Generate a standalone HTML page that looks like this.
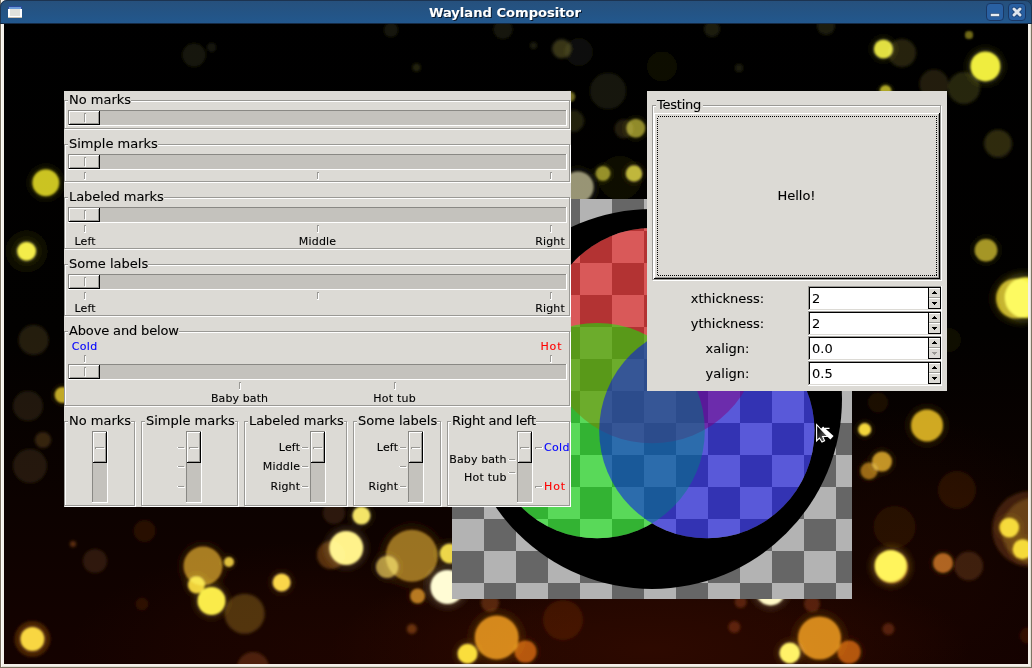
<!DOCTYPE html><html><head><meta charset="utf-8"><title>Wayland Compositor</title><style>
html,body{margin:0;padding:0}body{width:1032px;height:668px;overflow:hidden;position:relative;background:#e8e6e0;font-family:"DejaVu Sans","Liberation Sans",sans-serif}
.abs{position:absolute;display:block}
#content{position:absolute;left:4px;top:24px;width:1024px;height:640px;overflow:hidden;background:#000}
#content>.in{position:absolute;left:-4px;top:-24px;width:1032px;height:668px}
text{white-space:pre}
</style></head><body>
<svg class="abs" style="left:0;top:0" width="1032" height="668" font-family="DejaVu Sans, Liberation Sans, sans-serif"><defs><linearGradient id="tb" x1="0" y1="0" x2="0" y2="1"><stop offset="0" stop-color="#26507c"/><stop offset="1" stop-color="#22588e"/></linearGradient></defs><g shape-rendering="crispEdges"><rect x="0" y="0" width="1032" height="668" fill="#f4f1ea"/><rect x="1030" y="0" width="1" height="667" fill="#e4e0d6"/><rect x="1" y="666" width="1030" height="1" fill="#e4e0d6"/><rect x="1" y="0" width="1" height="667" fill="#fbf9f4"/><rect x="0" y="0" width="1" height="668" fill="#7d7463"/><rect x="1031" y="0" width="1" height="668" fill="#7d7463"/><rect x="0" y="667" width="1032" height="1" fill="#7d7463"/></g><rect x="1024" y="0" width="8" height="8" fill="#1d3f60"/><path d="M0 24 V7 A7 7 0 0 1 7 0 H1025 A7 7 0 0 1 1032 7 V24 Z" fill="url(#tb)"/><path d="M0.5 24 V7 A6.5 6.5 0 0 1 7 0.5 H1025 A6.5 6.5 0 0 1 1031.5 7 V24" fill="none" stroke="#1c3350" stroke-width="1"/><g shape-rendering="crispEdges"><rect x="0" y="23" width="1032" height="1" fill="#152a44"/></g></svg>
<div id="content"><div class="in">
<svg class="abs" style="left:0;top:0" width="1032" height="668"><defs><linearGradient id="bgv" x1="0" y1="0" x2="0" y2="1"><stop offset="0" stop-color="#000000"/><stop offset="0.5" stop-color="#020100"/><stop offset="0.75" stop-color="#0c0200"/><stop offset="1" stop-color="#150200"/></linearGradient><radialGradient id="glow1" cx="0.5" cy="0.5" r="0.5"><stop offset="0" stop-color="#300a00"/><stop offset="0.5" stop-color="#300a00" stop-opacity="0.7"/><stop offset="1" stop-color="#300a00" stop-opacity="0"/></radialGradient><filter id="bl" x="-5%" y="-5%" width="110%" height="110%"><feGaussianBlur stdDeviation="0.8"/></filter><filter id="bl2" x="-5%" y="-5%" width="110%" height="110%"><feGaussianBlur stdDeviation="1.8"/></filter><filter id="bl3" x="-5%" y="-5%" width="110%" height="110%"><feGaussianBlur stdDeviation="3"/></filter></defs><rect width="1032" height="668" fill="url(#bgv)"/><ellipse cx="650" cy="650" rx="320" ry="100" fill="url(#glow1)" opacity="0.9"/><ellipse cx="330" cy="650" rx="260" ry="110" fill="url(#glow1)" opacity="0.3"/><ellipse cx="900" cy="560" rx="170" ry="150" fill="url(#glow1)" opacity="0.22"/><g filter="url(#bl2)" style="mix-blend-mode:screen"><circle cx="902" cy="53" r="14" fill="#25230c" style="mix-blend-mode:screen"/><circle cx="624" cy="128.8" r="9.5" fill="#201f10" style="mix-blend-mode:screen"/><circle cx="608" cy="91" r="18" fill="#151509" style="mix-blend-mode:screen"/><circle cx="579" cy="52" r="14" fill="#111107" style="mix-blend-mode:screen"/><circle cx="662" cy="66.5" r="15" fill="#0d0d04" style="mix-blend-mode:screen"/><circle cx="712" cy="29" r="8" fill="#1a1a0b" style="mix-blend-mode:screen"/><circle cx="739" cy="68" r="4" fill="#1b1b0c" style="mix-blend-mode:screen"/><circle cx="826" cy="26" r="9" fill="#1a1a09" style="mix-blend-mode:screen"/><circle cx="964" cy="88" r="16" fill="#27260c" style="mix-blend-mode:screen"/><circle cx="934" cy="84" r="14.5" fill="#201f08" style="mix-blend-mode:screen"/><circle cx="997.5" cy="143" r="13.5" fill="#161507" style="mix-blend-mode:screen"/><circle cx="620" cy="178" r="22" fill="#111006" style="mix-blend-mode:screen"/><circle cx="573" cy="121" r="11" fill="#212011" style="mix-blend-mode:screen"/><circle cx="561.6" cy="48.8" r="9.5" fill="#373618" style="mix-blend-mode:screen"/><circle cx="503" cy="29.5" r="9.5" fill="#171708" style="mix-blend-mode:screen"/><circle cx="391" cy="30" r="7" fill="#161608" style="mix-blend-mode:screen"/><circle cx="416.5" cy="67.5" r="4" fill="#202010" style="mix-blend-mode:screen"/><circle cx="533.5" cy="45.4" r="3.5" fill="#1a1a0c" style="mix-blend-mode:screen"/><circle cx="194" cy="55" r="11.6" fill="#181808" style="mix-blend-mode:screen"/><circle cx="211.7" cy="47.3" r="4.5" fill="#171710" style="mix-blend-mode:screen"/><circle cx="26.6" cy="251.3" r="21" fill="#111004" style="mix-blend-mode:screen"/><circle cx="33.6" cy="340" r="15" fill="#231d0e" style="mix-blend-mode:screen"/><circle cx="28" cy="406" r="15" fill="#1a1509" style="mix-blend-mode:screen"/><circle cx="43" cy="440" r="8" fill="#2d230e" style="mix-blend-mode:screen"/><circle cx="30" cy="466" r="17" fill="#1a1309" style="mix-blend-mode:screen"/><circle cx="32.4" cy="639" r="18" fill="#2d1804" style="mix-blend-mode:screen"/><circle cx="95" cy="561" r="12" fill="#231309" style="mix-blend-mode:screen"/><circle cx="144.6" cy="531" r="11" fill="#1a0b04" style="mix-blend-mode:screen"/><circle cx="142" cy="604" r="6.5" fill="#1a0c04" style="mix-blend-mode:screen"/><circle cx="73" cy="544" r="3" fill="#552d0e" style="mix-blend-mode:screen"/><circle cx="331" cy="555" r="14" fill="#4b2d0e" style="mix-blend-mode:screen"/><circle cx="253" cy="668" r="16" fill="#371f09" style="mix-blend-mode:screen"/><circle cx="244.6" cy="613.7" r="20" fill="#413210" style="mix-blend-mode:screen"/><circle cx="411.8" cy="629" r="5" fill="#552d0e" style="mix-blend-mode:screen"/><circle cx="563" cy="620" r="20" fill="#230c04" style="mix-blend-mode:screen"/><circle cx="490" cy="603" r="9" fill="#412209" style="mix-blend-mode:screen"/><circle cx="334" cy="513" r="11" fill="#231609" style="mix-blend-mode:screen"/><circle cx="968.7" cy="566" r="14.4" fill="#2d1a0b" style="mix-blend-mode:screen"/><circle cx="1030" cy="529" r="38" fill="#341d08" style="mix-blend-mode:screen"/><circle cx="1035" cy="531" r="33" fill="#362710" style="mix-blend-mode:screen"/><circle cx="734.4" cy="627" r="6" fill="#411d09" style="mix-blend-mode:screen"/><circle cx="888.4" cy="629" r="6" fill="#411d09" style="mix-blend-mode:screen"/><circle cx="812" cy="604" r="8" fill="#411d09" style="mix-blend-mode:screen"/><circle cx="740.7" cy="602" r="6" fill="#411d09" style="mix-blend-mode:screen"/><circle cx="957" cy="490" r="19" fill="#1a0e04" style="mix-blend-mode:screen"/><circle cx="894.6" cy="527" r="21" fill="#160c03" style="mix-blend-mode:screen"/><circle cx="878" cy="402.5" r="10" fill="#160e04" style="mix-blend-mode:screen"/><circle cx="1027.8" cy="635.5" r="8" fill="#230c04" style="mix-blend-mode:screen"/><circle cx="998.4" cy="144" r="14" fill="#1a1809" style="mix-blend-mode:screen"/><circle cx="949" cy="340" r="12" fill="#110c04" style="mix-blend-mode:screen"/></g><g filter="url(#bl3)" style="mix-blend-mode:screen"><circle cx="985.4" cy="66.4" r="18.8" fill="#232307" style="mix-blend-mode:screen"/><circle cx="883.4" cy="49" r="12.0" fill="#212008" style="mix-blend-mode:screen"/><circle cx="969" cy="35" r="5.0" fill="#0f0f03" style="mix-blend-mode:screen"/><circle cx="635.8" cy="128.3" r="11.9" fill="#141306" style="mix-blend-mode:screen"/><circle cx="634" cy="173.5" r="10.4" fill="#1b1907" style="mix-blend-mode:screen"/><circle cx="603" cy="173.5" r="9.4" fill="#141306" style="mix-blend-mode:screen"/><circle cx="578" cy="187" r="19.5" fill="#151410" style="mix-blend-mode:screen"/><circle cx="570" cy="96.7" r="6.2" fill="#0f0f04" style="mix-blend-mode:screen"/><circle cx="885.6" cy="91" r="7.5" fill="#191806" style="mix-blend-mode:screen"/><circle cx="45.8" cy="182.8" r="16.9" fill="#1d1c04" style="mix-blend-mode:screen"/><circle cx="26.6" cy="251.3" r="11.9" fill="#242209" style="mix-blend-mode:screen"/><circle cx="62.6" cy="395" r="10.0" fill="#1b1806" style="mix-blend-mode:screen"/><circle cx="32.4" cy="639" r="15.0" fill="#241e08" style="mix-blend-mode:screen"/><circle cx="203" cy="566" r="24.4" fill="#171104" style="mix-blend-mode:screen"/><circle cx="211.5" cy="601" r="17.5" fill="#252209" style="mix-blend-mode:screen"/><circle cx="196.4" cy="585" r="10.6" fill="#221e07" style="mix-blend-mode:screen"/><circle cx="229" cy="562" r="6.2" fill="#201b07" style="mix-blend-mode:screen"/><circle cx="346.2" cy="548" r="21.2" fill="#262413" style="mix-blend-mode:screen"/><circle cx="361.4" cy="515.6" r="11.2" fill="#24210e" style="mix-blend-mode:screen"/><circle cx="281.6" cy="582.5" r="11.2" fill="#251f09" style="mix-blend-mode:screen"/><circle cx="411.8" cy="555.7" r="32.5" fill="#140f04" style="mix-blend-mode:screen"/><circle cx="387" cy="567" r="13.8" fill="#181408" style="mix-blend-mode:screen"/><circle cx="447.4" cy="587" r="21.2" fill="#26251f" style="mix-blend-mode:screen"/><circle cx="449.7" cy="553.5" r="12.5" fill="#221f09" style="mix-blend-mode:screen"/><circle cx="417.6" cy="596" r="9.4" fill="#191004" style="mix-blend-mode:screen"/><circle cx="496.7" cy="637.5" r="27.5" fill="#1e1204" style="mix-blend-mode:screen"/><circle cx="467.5" cy="653.8" r="12.5" fill="#252007" style="mix-blend-mode:screen"/><circle cx="525.5" cy="651.6" r="13.8" fill="#180a02" style="mix-blend-mode:screen"/><circle cx="927" cy="425.4" r="20.0" fill="#1e1804" style="mix-blend-mode:screen"/><circle cx="864.7" cy="429.5" r="8.1" fill="#241f07" style="mix-blend-mode:screen"/><circle cx="882" cy="461.6" r="12.5" fill="#1b1406" style="mix-blend-mode:screen"/><circle cx="869" cy="471" r="10.6" fill="#140e03" style="mix-blend-mode:screen"/><circle cx="891.5" cy="567" r="20.6" fill="#180e03" style="mix-blend-mode:screen"/><circle cx="890.6" cy="565.9" r="20.0" fill="#262209" style="mix-blend-mode:screen"/><circle cx="943" cy="563" r="12.5" fill="#180d04" style="mix-blend-mode:screen"/><circle cx="1009.2" cy="527.6" r="12.4" fill="#231e06" style="mix-blend-mode:screen"/><circle cx="1022.6" cy="549.2" r="12.5" fill="#231e06" style="mix-blend-mode:screen"/><circle cx="770.5" cy="590.5" r="18.8" fill="#26251c" style="mix-blend-mode:screen"/><circle cx="819.5" cy="638" r="27.0" fill="#1e1204" style="mix-blend-mode:screen"/><circle cx="789.8" cy="653" r="13.0" fill="#26240e" style="mix-blend-mode:screen"/><circle cx="849" cy="652" r="14.5" fill="#180a02" style="mix-blend-mode:screen"/><circle cx="1016" cy="298.5" r="25.0" fill="#1b1805" style="mix-blend-mode:screen"/><circle cx="1025.3" cy="297.6" r="25.5" fill="#242309" style="mix-blend-mode:screen"/><circle cx="986" cy="250.2" r="14.1" fill="#171506" style="mix-blend-mode:screen"/></g><g filter="url(#bl)" style="mix-blend-mode:screen"><circle cx="985.4" cy="66.4" r="15" fill="#ecea34" style="mix-blend-mode:screen"/><circle cx="883.4" cy="49" r="9.6" fill="#dcda38" style="mix-blend-mode:screen"/><circle cx="969" cy="35" r="4" fill="#6a6418" style="mix-blend-mode:screen"/><circle cx="635.8" cy="128.3" r="9.5" fill="#86802c" style="mix-blend-mode:screen"/><circle cx="634" cy="173.5" r="8.3" fill="#b4ac30" style="mix-blend-mode:screen"/><circle cx="603" cy="173.5" r="7.5" fill="#86802a" style="mix-blend-mode:screen"/><circle cx="578" cy="187" r="15.6" fill="#8e8a6e" style="mix-blend-mode:screen"/><circle cx="570" cy="96.7" r="5" fill="#6a6420" style="mix-blend-mode:screen"/><circle cx="885.6" cy="91" r="6" fill="#a8a028" style="mix-blend-mode:screen"/><circle cx="45.8" cy="182.8" r="13.5" fill="#c4bc20" style="mix-blend-mode:screen"/><circle cx="26.6" cy="251.3" r="9.5" fill="#f0e840" style="mix-blend-mode:screen"/><circle cx="62.6" cy="395" r="8" fill="#b8a028" style="mix-blend-mode:screen"/><circle cx="32.4" cy="639" r="12" fill="#f4cc38" style="mix-blend-mode:screen"/><circle cx="203" cy="566" r="19.5" fill="#9a7420" style="mix-blend-mode:screen"/><circle cx="211.5" cy="601" r="14" fill="#f8e840" style="mix-blend-mode:screen"/><circle cx="196.4" cy="585" r="8.5" fill="#e8c830" style="mix-blend-mode:screen"/><circle cx="229" cy="562" r="5" fill="#d8b830" style="mix-blend-mode:screen"/><circle cx="346.2" cy="548" r="17" fill="#fff080" style="mix-blend-mode:screen"/><circle cx="361.4" cy="515.6" r="9" fill="#f0e060" style="mix-blend-mode:screen"/><circle cx="281.6" cy="582.5" r="9" fill="#f8d040" style="mix-blend-mode:screen"/><circle cx="411.8" cy="555.7" r="26" fill="#8a6a20" style="mix-blend-mode:screen"/><circle cx="387" cy="567" r="11" fill="#a08838" style="mix-blend-mode:screen"/><circle cx="447.4" cy="587" r="17" fill="#fffcd0" style="mix-blend-mode:screen"/><circle cx="449.7" cy="553.5" r="10" fill="#e8d040" style="mix-blend-mode:screen"/><circle cx="417.6" cy="596" r="7.5" fill="#a87020" style="mix-blend-mode:screen"/><circle cx="496.7" cy="637.5" r="22" fill="#c87a1c" style="mix-blend-mode:screen"/><circle cx="467.5" cy="653.8" r="10" fill="#f8d830" style="mix-blend-mode:screen"/><circle cx="525.5" cy="651.6" r="11" fill="#a04810" style="mix-blend-mode:screen"/><circle cx="927" cy="425.4" r="16" fill="#c8a020" style="mix-blend-mode:screen"/><circle cx="864.7" cy="429.5" r="6.5" fill="#f0d030" style="mix-blend-mode:screen"/><circle cx="882" cy="461.6" r="10" fill="#b88828" style="mix-blend-mode:screen"/><circle cx="869" cy="471" r="8.5" fill="#8a6018" style="mix-blend-mode:screen"/><circle cx="891.5" cy="567" r="16.5" fill="#a06018" style="mix-blend-mode:screen"/><circle cx="890.6" cy="565.9" r="16" fill="#ffe840" style="mix-blend-mode:screen"/><circle cx="943" cy="563" r="10" fill="#a05a20" style="mix-blend-mode:screen"/><circle cx="1009.2" cy="527.6" r="9.9" fill="#ecc82c" style="mix-blend-mode:screen"/><circle cx="1022.6" cy="549.2" r="10" fill="#ecc828" style="mix-blend-mode:screen"/><circle cx="770.5" cy="590.5" r="15" fill="#fff8c0" style="mix-blend-mode:screen"/><circle cx="819.5" cy="638" r="21.6" fill="#c87a1c" style="mix-blend-mode:screen"/><circle cx="789.8" cy="653" r="10.4" fill="#fff060" style="mix-blend-mode:screen"/><circle cx="849" cy="652" r="11.6" fill="#a04810" style="mix-blend-mode:screen"/><circle cx="1016" cy="298.5" r="20" fill="#b8a426" style="mix-blend-mode:screen"/><circle cx="1025.3" cy="297.6" r="20.4" fill="#f6ee3c" style="mix-blend-mode:screen"/><circle cx="986" cy="250.2" r="11.3" fill="#9c8c28" style="mix-blend-mode:screen"/></g></svg>
<svg class="abs" style="left:452px;top:199px" width="400" height="400" viewBox="0 0 400 400"><defs><pattern id="ck" width="64" height="64" patternUnits="userSpaceOnUse"><rect width="64" height="64" fill="#666666"/><rect width="32" height="32" fill="#b3b3b3"/><rect x="32" y="32" width="32" height="32" fill="#b3b3b3"/></pattern><mask id="mk"><rect width="400" height="400" fill="#fff"/><circle cx="200.00" cy="136.67" r="107.67" fill="#000"/><circle cx="145.15" cy="231.67" r="107.67" fill="#000"/><circle cx="254.85" cy="231.67" r="107.67" fill="#000"/></mask></defs><rect width="400" height="400" fill="url(#ck)" shape-rendering="crispEdges"/><circle cx="200" cy="200" r="190" fill="#000" mask="url(#mk)"/><circle cx="200.00" cy="136.67" r="107.67" fill="#ff0000" fill-opacity="0.5"/><circle cx="145.15" cy="231.67" r="107.67" fill="#00ff00" fill-opacity="0.5"/><circle cx="254.85" cy="231.67" r="107.67" fill="#0000ff" fill-opacity="0.5"/></svg>
<svg class="abs" style="left:0;top:0;will-change:transform" width="1032" height="668" shape-rendering="crispEdges" font-family="DejaVu Sans, Liberation Sans, sans-serif"><rect x="64" y="91" width="507" height="416" fill="#dcdad5"/><rect x="65" y="101" width="506" height="1" fill="#ffffff"/><rect x="65" y="101" width="1" height="29" fill="#ffffff"/><rect x="65" y="129" width="506" height="1" fill="#ffffff"/><rect x="570" y="101" width="1" height="29" fill="#ffffff"/><rect x="64" y="100" width="506" height="1" fill="#9a9995"/><rect x="64" y="100" width="1" height="29" fill="#9a9995"/><rect x="64" y="128" width="506" height="1" fill="#9a9995"/><rect x="569" y="100" width="1" height="29" fill="#9a9995"/><rect x="68" y="100" width="63" height="2" fill="#dcdad5"/><text x="69" y="104" font-size="13" fill="#000" stroke="#000" stroke-width="0.1" text-anchor="start" >No marks</text><rect x="68" y="110" width="499" height="16" fill="#c4c2bd"/><rect x="68" y="110" width="499" height="1" fill="#898884"/><rect x="68" y="110" width="1" height="16" fill="#898884"/><rect x="68" y="125" width="499" height="1" fill="#ffffff"/><rect x="566" y="110" width="1" height="16" fill="#ffffff"/><rect x="69" y="111" width="31" height="14" fill="#dcdad5"/><rect x="69" y="111" width="31" height="1" fill="#ffffff"/><rect x="69" y="111" width="1" height="14" fill="#ffffff"/><rect x="70" y="123" width="29" height="1" fill="#9a9995"/><rect x="98" y="112" width="1" height="12" fill="#9a9995"/><rect x="69" y="124" width="31" height="1" fill="#000000"/><rect x="99" y="111" width="1" height="14" fill="#000000"/><rect x="85" y="114" width="1" height="9" fill="#ffffff"/><rect x="84" y="113" width="1" height="9" fill="#9a9995"/><rect x="84" y="113" width="2" height="1" fill="#9a9995"/><rect x="65" y="145" width="506" height="1" fill="#ffffff"/><rect x="65" y="145" width="1" height="38" fill="#ffffff"/><rect x="65" y="182" width="506" height="1" fill="#ffffff"/><rect x="570" y="145" width="1" height="38" fill="#ffffff"/><rect x="64" y="144" width="506" height="1" fill="#9a9995"/><rect x="64" y="144" width="1" height="38" fill="#9a9995"/><rect x="64" y="181" width="506" height="1" fill="#9a9995"/><rect x="569" y="144" width="1" height="38" fill="#9a9995"/><rect x="68" y="144" width="90" height="2" fill="#dcdad5"/><text x="69" y="148" font-size="13" fill="#000" stroke="#000" stroke-width="0.1" text-anchor="start" >Simple marks</text><rect x="68" y="154" width="499" height="16" fill="#c4c2bd"/><rect x="68" y="154" width="499" height="1" fill="#898884"/><rect x="68" y="154" width="1" height="16" fill="#898884"/><rect x="68" y="169" width="499" height="1" fill="#ffffff"/><rect x="566" y="154" width="1" height="16" fill="#ffffff"/><rect x="69" y="155" width="31" height="14" fill="#dcdad5"/><rect x="69" y="155" width="31" height="1" fill="#ffffff"/><rect x="69" y="155" width="1" height="14" fill="#ffffff"/><rect x="70" y="167" width="29" height="1" fill="#9a9995"/><rect x="98" y="156" width="1" height="12" fill="#9a9995"/><rect x="69" y="168" width="31" height="1" fill="#000000"/><rect x="99" y="155" width="1" height="14" fill="#000000"/><rect x="85" y="158" width="1" height="9" fill="#ffffff"/><rect x="84" y="157" width="1" height="9" fill="#9a9995"/><rect x="84" y="157" width="2" height="1" fill="#9a9995"/><rect x="85" y="173" width="1" height="7" fill="#ffffff"/><rect x="84" y="179" width="1" height="1" fill="#ffffff"/><rect x="84" y="172" width="1" height="7" fill="#9a9995"/><rect x="85" y="172" width="1" height="1" fill="#9a9995"/><rect x="318" y="173" width="1" height="7" fill="#ffffff"/><rect x="317" y="179" width="1" height="1" fill="#ffffff"/><rect x="317" y="172" width="1" height="7" fill="#9a9995"/><rect x="318" y="172" width="1" height="1" fill="#9a9995"/><rect x="551" y="173" width="1" height="7" fill="#ffffff"/><rect x="550" y="179" width="1" height="1" fill="#ffffff"/><rect x="550" y="172" width="1" height="7" fill="#9a9995"/><rect x="551" y="172" width="1" height="1" fill="#9a9995"/><rect x="65" y="198" width="506" height="1" fill="#ffffff"/><rect x="65" y="198" width="1" height="52" fill="#ffffff"/><rect x="65" y="249" width="506" height="1" fill="#ffffff"/><rect x="570" y="198" width="1" height="52" fill="#ffffff"/><rect x="64" y="197" width="506" height="1" fill="#9a9995"/><rect x="64" y="197" width="1" height="52" fill="#9a9995"/><rect x="64" y="248" width="506" height="1" fill="#9a9995"/><rect x="569" y="197" width="1" height="52" fill="#9a9995"/><rect x="68" y="197" width="96" height="2" fill="#dcdad5"/><text x="69" y="201" font-size="13" fill="#000" stroke="#000" stroke-width="0.1" text-anchor="start" textLength="94.8" lengthAdjust="spacing" >Labeled marks</text><rect x="68" y="207" width="499" height="16" fill="#c4c2bd"/><rect x="68" y="207" width="499" height="1" fill="#898884"/><rect x="68" y="207" width="1" height="16" fill="#898884"/><rect x="68" y="222" width="499" height="1" fill="#ffffff"/><rect x="566" y="207" width="1" height="16" fill="#ffffff"/><rect x="69" y="208" width="31" height="14" fill="#dcdad5"/><rect x="69" y="208" width="31" height="1" fill="#ffffff"/><rect x="69" y="208" width="1" height="14" fill="#ffffff"/><rect x="70" y="220" width="29" height="1" fill="#9a9995"/><rect x="98" y="209" width="1" height="12" fill="#9a9995"/><rect x="69" y="221" width="31" height="1" fill="#000000"/><rect x="99" y="208" width="1" height="14" fill="#000000"/><rect x="85" y="211" width="1" height="9" fill="#ffffff"/><rect x="84" y="210" width="1" height="9" fill="#9a9995"/><rect x="84" y="210" width="2" height="1" fill="#9a9995"/><rect x="85" y="226" width="1" height="7" fill="#ffffff"/><rect x="84" y="232" width="1" height="1" fill="#ffffff"/><rect x="84" y="225" width="1" height="7" fill="#9a9995"/><rect x="85" y="225" width="1" height="1" fill="#9a9995"/><rect x="318" y="226" width="1" height="7" fill="#ffffff"/><rect x="317" y="232" width="1" height="1" fill="#ffffff"/><rect x="317" y="225" width="1" height="7" fill="#9a9995"/><rect x="318" y="225" width="1" height="1" fill="#9a9995"/><rect x="551" y="226" width="1" height="7" fill="#ffffff"/><rect x="550" y="232" width="1" height="1" fill="#ffffff"/><rect x="550" y="225" width="1" height="7" fill="#9a9995"/><rect x="551" y="225" width="1" height="1" fill="#9a9995"/><text x="85" y="245" font-size="11" fill="#000" stroke="#000" stroke-width="0.1" text-anchor="middle" textLength="21.2" lengthAdjust="spacing" >Left</text><text x="317.5" y="245" font-size="11" fill="#000" stroke="#000" stroke-width="0.1" text-anchor="middle" textLength="37.3" lengthAdjust="spacing" >Middle</text><text x="550" y="245" font-size="11" fill="#000" stroke="#000" stroke-width="0.1" text-anchor="middle" textLength="29.5" lengthAdjust="spacing" >Right</text><rect x="65" y="265" width="506" height="1" fill="#ffffff"/><rect x="65" y="265" width="1" height="52" fill="#ffffff"/><rect x="65" y="316" width="506" height="1" fill="#ffffff"/><rect x="570" y="265" width="1" height="52" fill="#ffffff"/><rect x="64" y="264" width="506" height="1" fill="#9a9995"/><rect x="64" y="264" width="1" height="52" fill="#9a9995"/><rect x="64" y="315" width="506" height="1" fill="#9a9995"/><rect x="569" y="264" width="1" height="52" fill="#9a9995"/><rect x="68" y="264" width="80" height="2" fill="#dcdad5"/><text x="69" y="268" font-size="13" fill="#000" stroke="#000" stroke-width="0.1" text-anchor="start" >Some labels</text><rect x="68" y="274" width="499" height="16" fill="#c4c2bd"/><rect x="68" y="274" width="499" height="1" fill="#898884"/><rect x="68" y="274" width="1" height="16" fill="#898884"/><rect x="68" y="289" width="499" height="1" fill="#ffffff"/><rect x="566" y="274" width="1" height="16" fill="#ffffff"/><rect x="69" y="275" width="31" height="14" fill="#dcdad5"/><rect x="69" y="275" width="31" height="1" fill="#ffffff"/><rect x="69" y="275" width="1" height="14" fill="#ffffff"/><rect x="70" y="287" width="29" height="1" fill="#9a9995"/><rect x="98" y="276" width="1" height="12" fill="#9a9995"/><rect x="69" y="288" width="31" height="1" fill="#000000"/><rect x="99" y="275" width="1" height="14" fill="#000000"/><rect x="85" y="278" width="1" height="9" fill="#ffffff"/><rect x="84" y="277" width="1" height="9" fill="#9a9995"/><rect x="84" y="277" width="2" height="1" fill="#9a9995"/><rect x="85" y="293" width="1" height="7" fill="#ffffff"/><rect x="84" y="299" width="1" height="1" fill="#ffffff"/><rect x="84" y="292" width="1" height="7" fill="#9a9995"/><rect x="85" y="292" width="1" height="1" fill="#9a9995"/><rect x="318" y="293" width="1" height="7" fill="#ffffff"/><rect x="317" y="299" width="1" height="1" fill="#ffffff"/><rect x="317" y="292" width="1" height="7" fill="#9a9995"/><rect x="318" y="292" width="1" height="1" fill="#9a9995"/><rect x="551" y="293" width="1" height="7" fill="#ffffff"/><rect x="550" y="299" width="1" height="1" fill="#ffffff"/><rect x="550" y="292" width="1" height="7" fill="#9a9995"/><rect x="551" y="292" width="1" height="1" fill="#9a9995"/><text x="85" y="312" font-size="11" fill="#000" stroke="#000" stroke-width="0.1" text-anchor="middle" textLength="21.2" lengthAdjust="spacing" >Left</text><text x="550" y="312" font-size="11" fill="#000" stroke="#000" stroke-width="0.1" text-anchor="middle" textLength="29.5" lengthAdjust="spacing" >Right</text><rect x="65" y="332" width="506" height="1" fill="#ffffff"/><rect x="65" y="332" width="1" height="75" fill="#ffffff"/><rect x="65" y="406" width="506" height="1" fill="#ffffff"/><rect x="570" y="332" width="1" height="75" fill="#ffffff"/><rect x="64" y="331" width="506" height="1" fill="#9a9995"/><rect x="64" y="331" width="1" height="75" fill="#9a9995"/><rect x="64" y="405" width="506" height="1" fill="#9a9995"/><rect x="569" y="331" width="1" height="75" fill="#9a9995"/><rect x="68" y="331" width="111" height="2" fill="#dcdad5"/><text x="69" y="335" font-size="13" fill="#000" stroke="#000" stroke-width="0.1" text-anchor="start" textLength="110" lengthAdjust="spacing" >Above and below</text><text x="84.5" y="350" font-size="11" fill="#0000ff" stroke="#0000ff" stroke-width="0.1" text-anchor="middle" textLength="25.4" lengthAdjust="spacing" >Cold</text><text x="551" y="350" font-size="11" fill="#ff0000" stroke="#ff0000" stroke-width="0.1" text-anchor="middle" textLength="21.1" lengthAdjust="spacing" >Hot</text><rect x="85" y="356" width="1" height="7" fill="#ffffff"/><rect x="84" y="362" width="1" height="1" fill="#ffffff"/><rect x="84" y="355" width="1" height="7" fill="#9a9995"/><rect x="85" y="355" width="1" height="1" fill="#9a9995"/><rect x="551" y="356" width="1" height="7" fill="#ffffff"/><rect x="550" y="362" width="1" height="1" fill="#ffffff"/><rect x="550" y="355" width="1" height="7" fill="#9a9995"/><rect x="551" y="355" width="1" height="1" fill="#9a9995"/><rect x="68" y="364" width="499" height="16" fill="#c4c2bd"/><rect x="68" y="364" width="499" height="1" fill="#898884"/><rect x="68" y="364" width="1" height="16" fill="#898884"/><rect x="68" y="379" width="499" height="1" fill="#ffffff"/><rect x="566" y="364" width="1" height="16" fill="#ffffff"/><rect x="69" y="365" width="31" height="14" fill="#dcdad5"/><rect x="69" y="365" width="31" height="1" fill="#ffffff"/><rect x="69" y="365" width="1" height="14" fill="#ffffff"/><rect x="70" y="377" width="29" height="1" fill="#9a9995"/><rect x="98" y="366" width="1" height="12" fill="#9a9995"/><rect x="69" y="378" width="31" height="1" fill="#000000"/><rect x="99" y="365" width="1" height="14" fill="#000000"/><rect x="85" y="368" width="1" height="9" fill="#ffffff"/><rect x="84" y="367" width="1" height="9" fill="#9a9995"/><rect x="84" y="367" width="2" height="1" fill="#9a9995"/><rect x="240" y="383" width="1" height="7" fill="#ffffff"/><rect x="239" y="389" width="1" height="1" fill="#ffffff"/><rect x="239" y="382" width="1" height="7" fill="#9a9995"/><rect x="240" y="382" width="1" height="1" fill="#9a9995"/><rect x="395" y="383" width="1" height="7" fill="#ffffff"/><rect x="394" y="389" width="1" height="1" fill="#ffffff"/><rect x="394" y="382" width="1" height="7" fill="#9a9995"/><rect x="395" y="382" width="1" height="1" fill="#9a9995"/><text x="239.5" y="402" font-size="11" fill="#000" stroke="#000" stroke-width="0.1" text-anchor="middle" textLength="57.2" lengthAdjust="spacing" >Baby bath</text><text x="394.5" y="402" font-size="11" fill="#000" stroke="#000" stroke-width="0.1" text-anchor="middle" textLength="42.6" lengthAdjust="spacing" >Hot tub</text><rect x="65" y="422" width="71" height="1" fill="#ffffff"/><rect x="65" y="422" width="1" height="85" fill="#ffffff"/><rect x="65" y="506" width="71" height="1" fill="#ffffff"/><rect x="135" y="422" width="1" height="85" fill="#ffffff"/><rect x="64" y="421" width="71" height="1" fill="#9a9995"/><rect x="64" y="421" width="1" height="85" fill="#9a9995"/><rect x="64" y="505" width="71" height="1" fill="#9a9995"/><rect x="134" y="421" width="1" height="85" fill="#9a9995"/><rect x="68" y="421" width="63" height="2" fill="#dcdad5"/><text x="69" y="425" font-size="13" fill="#000" stroke="#000" stroke-width="0.1" text-anchor="start" >No marks</text><rect x="92" y="431" width="16" height="72" fill="#c4c2bd"/><rect x="92" y="431" width="16" height="1" fill="#898884"/><rect x="92" y="431" width="1" height="72" fill="#898884"/><rect x="92" y="502" width="16" height="1" fill="#ffffff"/><rect x="107" y="431" width="1" height="72" fill="#ffffff"/><rect x="93" y="432" width="14" height="31" fill="#dcdad5"/><rect x="93" y="432" width="14" height="1" fill="#ffffff"/><rect x="93" y="432" width="1" height="31" fill="#ffffff"/><rect x="94" y="461" width="12" height="1" fill="#9a9995"/><rect x="105" y="433" width="1" height="29" fill="#9a9995"/><rect x="93" y="462" width="14" height="1" fill="#000000"/><rect x="106" y="432" width="1" height="31" fill="#000000"/><rect x="96" y="448" width="9" height="1" fill="#ffffff"/><rect x="95" y="447" width="9" height="1" fill="#9a9995"/><rect x="95" y="447" width="1" height="2" fill="#9a9995"/><rect x="142" y="422" width="97" height="1" fill="#ffffff"/><rect x="142" y="422" width="1" height="85" fill="#ffffff"/><rect x="142" y="506" width="97" height="1" fill="#ffffff"/><rect x="238" y="422" width="1" height="85" fill="#ffffff"/><rect x="141" y="421" width="97" height="1" fill="#9a9995"/><rect x="141" y="421" width="1" height="85" fill="#9a9995"/><rect x="141" y="505" width="97" height="1" fill="#9a9995"/><rect x="237" y="421" width="1" height="85" fill="#9a9995"/><rect x="145" y="421" width="90" height="2" fill="#dcdad5"/><text x="146" y="425" font-size="13" fill="#000" stroke="#000" stroke-width="0.1" text-anchor="start" >Simple marks</text><rect x="186" y="431" width="16" height="72" fill="#c4c2bd"/><rect x="186" y="431" width="16" height="1" fill="#898884"/><rect x="186" y="431" width="1" height="72" fill="#898884"/><rect x="186" y="502" width="16" height="1" fill="#ffffff"/><rect x="201" y="431" width="1" height="72" fill="#ffffff"/><rect x="187" y="432" width="14" height="31" fill="#dcdad5"/><rect x="187" y="432" width="14" height="1" fill="#ffffff"/><rect x="187" y="432" width="1" height="31" fill="#ffffff"/><rect x="188" y="461" width="12" height="1" fill="#9a9995"/><rect x="199" y="433" width="1" height="29" fill="#9a9995"/><rect x="187" y="462" width="14" height="1" fill="#000000"/><rect x="200" y="432" width="1" height="31" fill="#000000"/><rect x="190" y="448" width="9" height="1" fill="#ffffff"/><rect x="189" y="447" width="9" height="1" fill="#9a9995"/><rect x="189" y="447" width="1" height="2" fill="#9a9995"/><rect x="178" y="448" width="7" height="1" fill="#ffffff"/><rect x="177" y="447" width="1" height="1" fill="#ffffff"/><rect x="178" y="447" width="6" height="1" fill="#9a9995"/><rect x="178" y="467" width="7" height="1" fill="#ffffff"/><rect x="177" y="466" width="1" height="1" fill="#ffffff"/><rect x="178" y="466" width="6" height="1" fill="#9a9995"/><rect x="178" y="487" width="7" height="1" fill="#ffffff"/><rect x="177" y="486" width="1" height="1" fill="#ffffff"/><rect x="178" y="486" width="6" height="1" fill="#9a9995"/><rect x="245" y="422" width="103" height="1" fill="#ffffff"/><rect x="245" y="422" width="1" height="85" fill="#ffffff"/><rect x="245" y="506" width="103" height="1" fill="#ffffff"/><rect x="347" y="422" width="1" height="85" fill="#ffffff"/><rect x="244" y="421" width="103" height="1" fill="#9a9995"/><rect x="244" y="421" width="1" height="85" fill="#9a9995"/><rect x="244" y="505" width="103" height="1" fill="#9a9995"/><rect x="346" y="421" width="1" height="85" fill="#9a9995"/><rect x="248" y="421" width="96" height="2" fill="#dcdad5"/><text x="249" y="425" font-size="13" fill="#000" stroke="#000" stroke-width="0.1" text-anchor="start" textLength="94.8" lengthAdjust="spacing" >Labeled marks</text><rect x="310" y="431" width="16" height="72" fill="#c4c2bd"/><rect x="310" y="431" width="16" height="1" fill="#898884"/><rect x="310" y="431" width="1" height="72" fill="#898884"/><rect x="310" y="502" width="16" height="1" fill="#ffffff"/><rect x="325" y="431" width="1" height="72" fill="#ffffff"/><rect x="311" y="432" width="14" height="31" fill="#dcdad5"/><rect x="311" y="432" width="14" height="1" fill="#ffffff"/><rect x="311" y="432" width="1" height="31" fill="#ffffff"/><rect x="312" y="461" width="12" height="1" fill="#9a9995"/><rect x="323" y="433" width="1" height="29" fill="#9a9995"/><rect x="311" y="462" width="14" height="1" fill="#000000"/><rect x="324" y="432" width="1" height="31" fill="#000000"/><rect x="314" y="448" width="9" height="1" fill="#ffffff"/><rect x="313" y="447" width="9" height="1" fill="#9a9995"/><rect x="313" y="447" width="1" height="2" fill="#9a9995"/><rect x="302" y="448" width="7" height="1" fill="#ffffff"/><rect x="301" y="447" width="1" height="1" fill="#ffffff"/><rect x="302" y="447" width="6" height="1" fill="#9a9995"/><rect x="302" y="467" width="7" height="1" fill="#ffffff"/><rect x="301" y="466" width="1" height="1" fill="#ffffff"/><rect x="302" y="466" width="6" height="1" fill="#9a9995"/><rect x="302" y="487" width="7" height="1" fill="#ffffff"/><rect x="301" y="486" width="1" height="1" fill="#ffffff"/><rect x="302" y="486" width="6" height="1" fill="#9a9995"/><text x="300" y="451" font-size="11" fill="#000" stroke="#000" stroke-width="0.1" text-anchor="end" textLength="21.2" lengthAdjust="spacing" >Left</text><text x="300" y="470" font-size="11" fill="#000" stroke="#000" stroke-width="0.1" text-anchor="end" textLength="37.3" lengthAdjust="spacing" >Middle</text><text x="300" y="490" font-size="11" fill="#000" stroke="#000" stroke-width="0.1" text-anchor="end" textLength="29.5" lengthAdjust="spacing" >Right</text><rect x="354" y="422" width="88" height="1" fill="#ffffff"/><rect x="354" y="422" width="1" height="85" fill="#ffffff"/><rect x="354" y="506" width="88" height="1" fill="#ffffff"/><rect x="441" y="422" width="1" height="85" fill="#ffffff"/><rect x="353" y="421" width="88" height="1" fill="#9a9995"/><rect x="353" y="421" width="1" height="85" fill="#9a9995"/><rect x="353" y="505" width="88" height="1" fill="#9a9995"/><rect x="440" y="421" width="1" height="85" fill="#9a9995"/><rect x="357" y="421" width="80" height="2" fill="#dcdad5"/><text x="358" y="425" font-size="13" fill="#000" stroke="#000" stroke-width="0.1" text-anchor="start" >Some labels</text><rect x="408" y="431" width="16" height="72" fill="#c4c2bd"/><rect x="408" y="431" width="16" height="1" fill="#898884"/><rect x="408" y="431" width="1" height="72" fill="#898884"/><rect x="408" y="502" width="16" height="1" fill="#ffffff"/><rect x="423" y="431" width="1" height="72" fill="#ffffff"/><rect x="409" y="432" width="14" height="31" fill="#dcdad5"/><rect x="409" y="432" width="14" height="1" fill="#ffffff"/><rect x="409" y="432" width="1" height="31" fill="#ffffff"/><rect x="410" y="461" width="12" height="1" fill="#9a9995"/><rect x="421" y="433" width="1" height="29" fill="#9a9995"/><rect x="409" y="462" width="14" height="1" fill="#000000"/><rect x="422" y="432" width="1" height="31" fill="#000000"/><rect x="412" y="448" width="9" height="1" fill="#ffffff"/><rect x="411" y="447" width="9" height="1" fill="#9a9995"/><rect x="411" y="447" width="1" height="2" fill="#9a9995"/><rect x="400" y="448" width="7" height="1" fill="#ffffff"/><rect x="399" y="447" width="1" height="1" fill="#ffffff"/><rect x="400" y="447" width="6" height="1" fill="#9a9995"/><rect x="400" y="467" width="7" height="1" fill="#ffffff"/><rect x="399" y="466" width="1" height="1" fill="#ffffff"/><rect x="400" y="466" width="6" height="1" fill="#9a9995"/><rect x="400" y="487" width="7" height="1" fill="#ffffff"/><rect x="399" y="486" width="1" height="1" fill="#ffffff"/><rect x="400" y="486" width="6" height="1" fill="#9a9995"/><text x="398" y="451" font-size="11" fill="#000" stroke="#000" stroke-width="0.1" text-anchor="end" textLength="21.2" lengthAdjust="spacing" >Left</text><text x="398" y="490" font-size="11" fill="#000" stroke="#000" stroke-width="0.1" text-anchor="end" textLength="29.5" lengthAdjust="spacing" >Right</text><rect x="448" y="422" width="123" height="1" fill="#ffffff"/><rect x="448" y="422" width="1" height="85" fill="#ffffff"/><rect x="448" y="506" width="123" height="1" fill="#ffffff"/><rect x="570" y="422" width="1" height="85" fill="#ffffff"/><rect x="447" y="421" width="123" height="1" fill="#9a9995"/><rect x="447" y="421" width="1" height="85" fill="#9a9995"/><rect x="447" y="505" width="123" height="1" fill="#9a9995"/><rect x="569" y="421" width="1" height="85" fill="#9a9995"/><rect x="451" y="421" width="85" height="2" fill="#dcdad5"/><text x="452" y="425" font-size="13" fill="#000" stroke="#000" stroke-width="0.1" text-anchor="start" textLength="84" lengthAdjust="spacing" >Right and left</text><rect x="517" y="431" width="16" height="72" fill="#c4c2bd"/><rect x="517" y="431" width="16" height="1" fill="#898884"/><rect x="517" y="431" width="1" height="72" fill="#898884"/><rect x="517" y="502" width="16" height="1" fill="#ffffff"/><rect x="532" y="431" width="1" height="72" fill="#ffffff"/><rect x="518" y="432" width="14" height="31" fill="#dcdad5"/><rect x="518" y="432" width="14" height="1" fill="#ffffff"/><rect x="518" y="432" width="1" height="31" fill="#ffffff"/><rect x="519" y="461" width="12" height="1" fill="#9a9995"/><rect x="530" y="433" width="1" height="29" fill="#9a9995"/><rect x="518" y="462" width="14" height="1" fill="#000000"/><rect x="531" y="432" width="1" height="31" fill="#000000"/><rect x="521" y="448" width="9" height="1" fill="#ffffff"/><rect x="520" y="447" width="9" height="1" fill="#9a9995"/><rect x="520" y="447" width="1" height="2" fill="#9a9995"/><rect x="509" y="460" width="7" height="1" fill="#ffffff"/><rect x="508" y="459" width="1" height="1" fill="#ffffff"/><rect x="509" y="459" width="6" height="1" fill="#9a9995"/><rect x="509" y="473" width="7" height="1" fill="#ffffff"/><rect x="508" y="472" width="1" height="1" fill="#ffffff"/><rect x="509" y="472" width="6" height="1" fill="#9a9995"/><rect x="536" y="448" width="7" height="1" fill="#ffffff"/><rect x="542" y="447" width="1" height="1" fill="#ffffff"/><rect x="535" y="447" width="7" height="1" fill="#9a9995"/><rect x="535" y="448" width="1" height="1" fill="#9a9995"/><rect x="536" y="487" width="7" height="1" fill="#ffffff"/><rect x="542" y="486" width="1" height="1" fill="#ffffff"/><rect x="535" y="486" width="7" height="1" fill="#9a9995"/><rect x="535" y="487" width="1" height="1" fill="#9a9995"/><text x="506.5" y="463" font-size="11" fill="#000" stroke="#000" stroke-width="0.1" text-anchor="end" textLength="57.2" lengthAdjust="spacing" >Baby bath</text><text x="506.5" y="481" font-size="11" fill="#000" stroke="#000" stroke-width="0.1" text-anchor="end" textLength="42.6" lengthAdjust="spacing" >Hot tub</text><text x="544" y="451" font-size="11" fill="#0000ff" stroke="#0000ff" stroke-width="0.1" text-anchor="start" textLength="25.4" lengthAdjust="spacing" >Cold</text><text x="544" y="490" font-size="11" fill="#ff0000" stroke="#ff0000" stroke-width="0.1" text-anchor="start" textLength="21.1" lengthAdjust="spacing" >Hot</text></svg>
<svg class="abs" style="left:0;top:0;will-change:transform" width="1032" height="668" shape-rendering="crispEdges" font-family="DejaVu Sans, Liberation Sans, sans-serif"><rect x="647" y="91" width="300" height="300" fill="#dcdad5"/><rect x="653" y="106" width="289" height="1" fill="#ffffff"/><rect x="653" y="106" width="1" height="175" fill="#ffffff"/><rect x="653" y="280" width="289" height="1" fill="#ffffff"/><rect x="941" y="106" width="1" height="175" fill="#ffffff"/><rect x="652" y="105" width="289" height="1" fill="#9a9995"/><rect x="652" y="105" width="1" height="175" fill="#9a9995"/><rect x="652" y="279" width="289" height="1" fill="#9a9995"/><rect x="940" y="105" width="1" height="175" fill="#9a9995"/><rect x="656" y="105" width="47" height="2" fill="#dcdad5"/><text x="657" y="109" font-size="13" fill="#000" stroke="#000" stroke-width="0.1" text-anchor="start" textLength="44.3" lengthAdjust="spacing" >Testing</text><rect x="654" y="113" width="286" height="1" fill="#ffffff"/><rect x="654" y="113" width="1" height="166" fill="#ffffff"/><rect x="655" y="277" width="284" height="1" fill="#9a9995"/><rect x="938" y="114" width="1" height="164" fill="#9a9995"/><rect x="654" y="278" width="286" height="1" fill="#000000"/><rect x="939" y="113" width="1" height="166" fill="#000000"/><rect x="657.5" y="116.5" width="279" height="159" fill="none" stroke="#000" stroke-width="1" stroke-dasharray="1 1"/><text x="796.5" y="200" font-size="13" fill="#000" stroke="#000" stroke-width="0.1" text-anchor="middle" >Hello!</text><text x="727.5" y="303" font-size="13" fill="#000" stroke="#000" stroke-width="0.1" text-anchor="middle" >xthickness:</text><text x="727.5" y="328" font-size="13" fill="#000" stroke="#000" stroke-width="0.1" text-anchor="middle" >ythickness:</text><text x="727.5" y="353" font-size="13" fill="#000" stroke="#000" stroke-width="0.1" text-anchor="middle" >xalign:</text><text x="727.5" y="378" font-size="13" fill="#000" stroke="#000" stroke-width="0.1" text-anchor="middle" >yalign:</text><rect x="808" y="286" width="134" height="25" fill="#fff"/><rect x="808" y="286" width="133" height="1" fill="#9a9995"/><rect x="808" y="286" width="1" height="24" fill="#9a9995"/><rect x="809" y="287" width="132" height="1" fill="#000000"/><rect x="809" y="287" width="1" height="22" fill="#000000"/><rect x="809" y="309" width="132" height="1" fill="#dcdad5"/><rect x="808" y="310" width="134" height="1" fill="#ffffff"/><rect x="941" y="286" width="1" height="25" fill="#ffffff"/><rect x="940" y="287" width="1" height="22" fill="#000000"/><rect x="928" y="288" width="1" height="21" fill="#000000"/><rect x="929" y="288" width="11" height="20" fill="#dcdad5"/><rect x="929" y="288" width="11" height="1" fill="#ffffff"/><rect x="929" y="297" width="11" height="1" fill="#9a9995"/><rect x="929" y="298" width="11" height="1" fill="#ffffff"/><rect x="928" y="308" width="13" height="1" fill="#000000"/><rect x="934" y="291" width="1" height="1" fill="#000000"/><rect x="933" y="292" width="3" height="1" fill="#000000"/><rect x="932" y="293" width="5" height="1" fill="#000000"/><rect x="932" y="302" width="5" height="1" fill="#000000"/><rect x="933" y="303" width="3" height="1" fill="#000000"/><rect x="934" y="304" width="1" height="1" fill="#000000"/><text x="812" y="303" font-size="13" fill="#000" stroke="#000" stroke-width="0.1" text-anchor="start" >2</text><rect x="808" y="311" width="134" height="25" fill="#fff"/><rect x="808" y="311" width="133" height="1" fill="#9a9995"/><rect x="808" y="311" width="1" height="24" fill="#9a9995"/><rect x="809" y="312" width="132" height="1" fill="#000000"/><rect x="809" y="312" width="1" height="22" fill="#000000"/><rect x="809" y="334" width="132" height="1" fill="#dcdad5"/><rect x="808" y="335" width="134" height="1" fill="#ffffff"/><rect x="941" y="311" width="1" height="25" fill="#ffffff"/><rect x="940" y="312" width="1" height="22" fill="#000000"/><rect x="928" y="313" width="1" height="21" fill="#000000"/><rect x="929" y="313" width="11" height="20" fill="#dcdad5"/><rect x="929" y="313" width="11" height="1" fill="#ffffff"/><rect x="929" y="322" width="11" height="1" fill="#9a9995"/><rect x="929" y="323" width="11" height="1" fill="#ffffff"/><rect x="928" y="333" width="13" height="1" fill="#000000"/><rect x="934" y="316" width="1" height="1" fill="#000000"/><rect x="933" y="317" width="3" height="1" fill="#000000"/><rect x="932" y="318" width="5" height="1" fill="#000000"/><rect x="932" y="327" width="5" height="1" fill="#000000"/><rect x="933" y="328" width="3" height="1" fill="#000000"/><rect x="934" y="329" width="1" height="1" fill="#000000"/><text x="812" y="328" font-size="13" fill="#000" stroke="#000" stroke-width="0.1" text-anchor="start" >2</text><rect x="808" y="336" width="134" height="25" fill="#fff"/><rect x="808" y="336" width="133" height="1" fill="#9a9995"/><rect x="808" y="336" width="1" height="24" fill="#9a9995"/><rect x="809" y="337" width="132" height="1" fill="#000000"/><rect x="809" y="337" width="1" height="22" fill="#000000"/><rect x="809" y="359" width="132" height="1" fill="#dcdad5"/><rect x="808" y="360" width="134" height="1" fill="#ffffff"/><rect x="941" y="336" width="1" height="25" fill="#ffffff"/><rect x="940" y="337" width="1" height="22" fill="#000000"/><rect x="928" y="338" width="1" height="21" fill="#000000"/><rect x="929" y="338" width="11" height="20" fill="#dcdad5"/><rect x="929" y="338" width="11" height="1" fill="#ffffff"/><rect x="929" y="347" width="11" height="1" fill="#9a9995"/><rect x="929" y="348" width="11" height="1" fill="#ffffff"/><rect x="928" y="358" width="13" height="1" fill="#000000"/><rect x="934" y="341" width="1" height="1" fill="#000000"/><rect x="933" y="342" width="3" height="1" fill="#000000"/><rect x="932" y="343" width="5" height="1" fill="#000000"/><rect x="932" y="352" width="5" height="1" fill="#9a9894"/><rect x="933" y="353" width="3" height="1" fill="#9a9894"/><rect x="934" y="354" width="1" height="1" fill="#9a9894"/><text x="812" y="353" font-size="13" fill="#000" stroke="#000" stroke-width="0.1" text-anchor="start" >0.0</text><rect x="808" y="361" width="134" height="25" fill="#fff"/><rect x="808" y="361" width="133" height="1" fill="#9a9995"/><rect x="808" y="361" width="1" height="24" fill="#9a9995"/><rect x="809" y="362" width="132" height="1" fill="#000000"/><rect x="809" y="362" width="1" height="22" fill="#000000"/><rect x="809" y="384" width="132" height="1" fill="#dcdad5"/><rect x="808" y="385" width="134" height="1" fill="#ffffff"/><rect x="941" y="361" width="1" height="25" fill="#ffffff"/><rect x="940" y="362" width="1" height="22" fill="#000000"/><rect x="928" y="363" width="1" height="21" fill="#000000"/><rect x="929" y="363" width="11" height="20" fill="#dcdad5"/><rect x="929" y="363" width="11" height="1" fill="#ffffff"/><rect x="929" y="372" width="11" height="1" fill="#9a9995"/><rect x="929" y="373" width="11" height="1" fill="#ffffff"/><rect x="928" y="383" width="13" height="1" fill="#000000"/><rect x="934" y="366" width="1" height="1" fill="#000000"/><rect x="933" y="367" width="3" height="1" fill="#000000"/><rect x="932" y="368" width="5" height="1" fill="#000000"/><rect x="932" y="377" width="5" height="1" fill="#000000"/><rect x="933" y="378" width="3" height="1" fill="#000000"/><rect x="934" y="379" width="1" height="1" fill="#000000"/><text x="812" y="378" font-size="13" fill="#000" stroke="#000" stroke-width="0.1" text-anchor="start" >0.5</text></svg>
<svg class="abs" style="left:812px;top:420px" width="28" height="28" viewBox="0 0 28 28"><defs><linearGradient id="cg" x1="0" y1="0" x2="1" y2="1"><stop offset="0.2" stop-color="#000"/><stop offset="0.7" stop-color="#555"/></linearGradient></defs><path d="M9.5 8.2 L20 17.8" stroke="#fff" stroke-width="4.6" stroke-linecap="butt"/><path d="M13 8.4 H17.5 M12.5 15.6 H17" stroke="#fff" stroke-width="1.4"/><path d="M4.6 4.6 L4.6 20.8 L7.4 18 L10 22 L12.6 20.8 L10.6 16.6 L15.6 16.2 Z" fill="url(#cg)" stroke="#fff" stroke-width="1.1"/></svg>
</div></div>
<svg class="abs" style="left:0;top:0;will-change:transform" width="1032" height="24" font-family="DejaVu Sans, Liberation Sans, sans-serif"><g shape-rendering="crispEdges"><rect x="8" y="6" width="14" height="12" fill="#ffffff"/><rect x="8" y="6" width="14" height="3" fill="#4a7ac0"/><rect x="8" y="6" width="14" height="1" fill="#2a4a9a"/><rect x="8" y="6" width="1" height="3" fill="#2a4a9a"/><rect x="21" y="6" width="1" height="3" fill="#2a4a9a"/><rect x="9" y="7" width="12" height="2" fill="#6a9ad8"/><rect x="10" y="9" width="10" height="7" fill="#e0e2dc"/><rect x="8" y="17" width="14" height="1" fill="#c8c0b0"/></g><text x="506" y="18" font-size="13.1" fill="#0c1c30" stroke="#0c1c30" stroke-width="0.1" text-anchor="middle" font-weight="bold">Wayland Compositor</text><text x="505" y="17" font-size="13.1" fill="#ffffff" stroke="#ffffff" stroke-width="0.1" text-anchor="middle" font-weight="bold">Wayland Compositor</text><rect x="986.5" y="3.5" width="17" height="17" rx="3.5" fill="#2960a2" stroke="#1a3864"/><rect x="1008.5" y="3.5" width="17" height="17" rx="3.5" fill="#2960a2" stroke="#1a3864"/><rect x="990.5" y="13.5" width="9" height="3" fill="#e8edf2" stroke="#1a3864" stroke-opacity="0.55" stroke-width="0.9"/><path d="M1014 9 L1020 15 M1020 9 L1014 15" stroke="#1a3864" stroke-width="4.6" stroke-linecap="round" opacity="0.6"/><path d="M1014 9 L1020 15 M1020 9 L1014 15" stroke="#dfe6ee" stroke-width="2.9" stroke-linecap="round"/></svg>
</body></html>
